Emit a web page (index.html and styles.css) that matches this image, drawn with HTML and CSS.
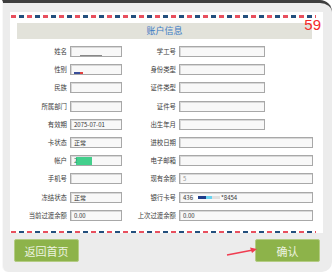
FILE: index.html
```html
<!DOCTYPE html>
<html lang="zh-CN">
<head>
  <meta charset="UTF-8">
  <meta name="viewport" content="width=device-width, initial-scale=1.0">
  <title>账户信息</title>
  <link rel="stylesheet" href="styles.css">
</head>
<body>
  <div class="panel">
    <div class="card">
      <div class="airmail top"></div>
      <span class="countdown">59</span>
      <div class="card-title">账户信息</div>
      <div class="info-grid">
        <label>姓名</label>
        <div class="field"><span class="mask mask-name"></span></div>
        <label>学工号</label>
        <div class="field short"></div>

        <label>性别</label>
        <div class="field"><span class="mask mask-sex"></span></div>
        <label>身份类型</label>
        <div class="field short"></div>

        <label>民族</label>
        <div class="field"></div>
        <label>证件类型</label>
        <div class="field short"></div>

        <label>所属部门</label>
        <div class="field"></div>
        <label>证件号</label>
        <div class="field short"></div>

        <label>有效期</label>
        <div class="field">2075-07-01</div>
        <label>出生年月</label>
        <div class="field short"></div>

        <label>卡状态</label>
        <div class="field">正常</div>
        <label>进校日期</label>
        <div class="field"></div>

        <label>帐户</label>
        <div class="field"><span class="mask mask-acct">2</span></div>
        <label>电子邮箱</label>
        <div class="field"></div>

        <label>手机号</label>
        <div class="field"></div>
        <label>现有余额</label>
        <div class="field"><span class="faded">5</span></div>

        <label>冻结状态</label>
        <div class="field">正常</div>
        <label>银行卡号</label>
        <div class="field">436<span class="mask mask-bank"></span>*8454</div>

        <label>当前过渡余额</label>
        <div class="field">0.00</div>
        <label>上次过渡余额</label>
        <div class="field">0.00</div>
      </div>
      <div class="airmail bottom"></div>
    </div>
    <div class="actions">
      <button class="btn">返回首页</button>
      <svg class="pointer" width="32" height="12" viewBox="0 0 32 12">
        <path d="M1 10 L27 5" stroke="#f03c50" stroke-width="1.6" fill="none"/>
        <path d="M31 4 L24 2.5 L26 8 Z" fill="#f03c50"/>
      </svg>
      <button class="btn">确认</button>
    </div>
  </div>
</body>
</html>
```

FILE: styles.css
```css
* {
  margin: 0;
  padding: 0;
  box-sizing: border-box;
}
body {
  background: #fff;
  font-family: "Noto Sans CJK SC", "Liberation Sans", sans-serif;
  color: #333;
}
.panel {
  position: relative;
  width: 330px;
  height: 272px;
  margin-left: 2px;
  padding: 9px 9px 0 7px;
  background: #ececec;
  border-top: 3px solid #3e3e3e;
  border-left: 1px solid #f8f8f8;
  border-radius: 0 12px 10px 6px;
}
.card {
  position: relative;
  height: 221px;
  padding-top: 3px;
  background: #fff;
}
.airmail {
  height: 2px;
  margin: 0 7px 0 1px;
  background-image: repeating-linear-gradient(90deg, #e8505e 0px, #e8505e 5px, #ffffff 5px, #ffffff 8px, #234f7d 8px, #234f7d 13px, #ffffff 13px, #ffffff 16px);
}
.airmail.top {
  height: 3px;
}
.airmail.bottom {
  margin-top: 10px;
}
.countdown {
  position: absolute;
  top: 4px;
  right: 2px;
  font-family: "Liberation Sans", sans-serif;
  font-size: 15px;
  line-height: 17px;
  color: #f42a2a;
}
.card-title {
  height: 16px;
  margin: 5px 11px 0 7px;
  background: #e2e2da;
  color: #3d7cc4;
  font-size: 9px;
  line-height: 16px;
  text-align: center;
}
.info-grid {
  display: grid;
  grid-template-columns: 53px 52px 57px 134px;
  grid-auto-rows: 11px;
  row-gap: 7.2px;
  margin-top: 7px;
  padding-left: 7px;
}
.info-grid label {
  padding-right: 3px;
  font-size: 6.4px;
  line-height: 11px;
  text-align: right;
  white-space: nowrap;
  color: #3a3a3a;
}
.field {
  height: 11px;
  padding-left: 3px;
  border: 1px solid #a8a8a8;
  box-shadow: inset 1px 1px 0 #d8d8d8;
  background: #f8f8f8;
  font-size: 6px;
  line-height: 9px;
  color: #333;
  white-space: nowrap;
  overflow: hidden;
}
.field.short {
  width: 86px;
}
.mask {
  display: inline-block;
  vertical-align: middle;
}
.mask-name {
  width: 22px;
  height: 1px;
  margin-left: 6px;
  margin-top: 6px;
  background: #888;
}
.mask-sex {
  width: 9px;
  height: 2px;
  margin-top: 4px;
  background: linear-gradient(90deg, #3a4f9a 0 6px, #e04040 6px);
}
.mask-acct {
  width: 18px;
  height: 8px;
  margin-top: -2px;
  background: linear-gradient(90deg, #eef 0 2px, #43cf8c 2px);
  color: #2a8a5a;
  font-size: 6px;
  line-height: 8px;
}
.mask-bank {
  width: 26px;
  height: 3px;
  margin: 0 1px;
  background: linear-gradient(90deg, #fff 0 4px, #1f3d8a 4px 12px, #6ad4f0 12px 18px, #e0e0e0 18px);
}
.faded {
  color: #999;
}
.actions {
  position: relative;
  display: flex;
  align-items: center;
  justify-content: space-between;
  margin-top: 6px;
  padding: 0 3px 0 4px;
}
.btn {
  width: 65px;
  height: 23px;
  border: 1px solid #b4cc84;
  border-radius: 2px;
  background: #8db34a;
  color: #eef4e0;
  font-family: "Noto Sans CJK SC", sans-serif;
  font-size: 11px;
}
.pointer {
  position: absolute;
  left: 216px;
  top: 6px;
}
```
